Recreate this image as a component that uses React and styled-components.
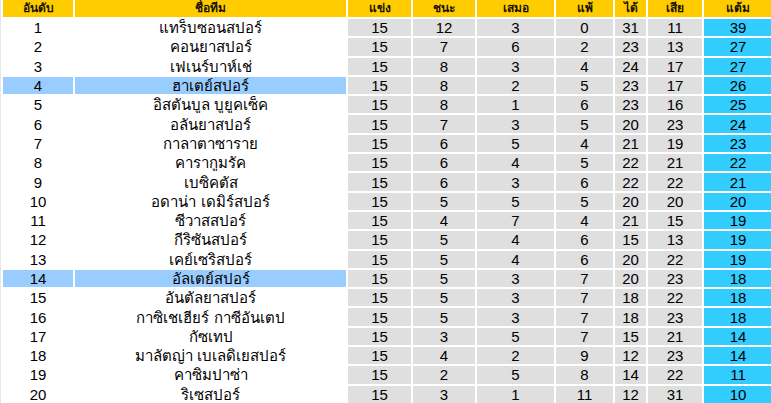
import React from "react";
import styled, { createGlobalStyle } from "styled-components";

const GlobalStyle = createGlobalStyle`
  html, body {
    margin: 0;
    padding: 0;
    background: #e6e6e6;
    overflow: hidden;
  }
`;

const Wrap = styled.div`
  width: 790px;
  padding-left: 1px;
  margin-top: -2px;
`;

const Table = styled.table`
  table-layout: fixed;
  border-collapse: separate;
  border-spacing: 2px;
  background: #ffffff;
  font-family: Tahoma, "Liberation Sans", "Noto Sans", sans-serif;
  font-size: 15px;
  color: #000;
`;

const Head = styled.th`
  background: #ffcc00;
  color: #1a1200;
  font-weight: bold;
  font-size: 12px;
  height: 17px;
  padding: 0;
  line-height: 17px;
  text-align: center;
  white-space: nowrap;
  overflow: hidden;
`;

const Cell = styled.td`
  height: 17.3px;
  padding: 0;
  line-height: 17px;
  text-align: center;
  white-space: nowrap;
  overflow: hidden;
  background: ${(p) =>
    p.$kind === "points"
      ? "#33ccff"
      : p.$kind === "stat"
      ? "#dfdfdf"
      : p.$hl
      ? "#99ccff"
      : "#ffffff"};
`;

const widths = [70, 271, 63, 62, 77, 57, 31, 54, 68];
const headers = ["อันดับ", "ชื่อทีม", "แข่ง", "ชนะ", "เสมอ", "แพ้", "ได้", "เสีย", "แต้ม"];

const rows = [
  ["แทร็บซอนสปอร์", 15, 12, 3, 0, 31, 11, 39],
  ["คอนยาสปอร์", 15, 7, 6, 2, 23, 13, 27],
  ["เฟเนร์บาห์เช่", 15, 8, 3, 4, 24, 17, 27],
  ["ฮาเตย์สปอร์", 15, 8, 2, 5, 23, 17, 26],
  ["อิสตันบูล บูยูคเซ็ค", 15, 8, 1, 6, 23, 16, 25],
  ["อลันยาสปอร์", 15, 7, 3, 5, 20, 23, 24],
  ["กาลาตาซาราย", 15, 6, 5, 4, 21, 19, 23],
  ["คารากูมรัค", 15, 6, 4, 5, 22, 21, 22],
  ["เบซิคตัส", 15, 6, 3, 6, 22, 22, 21],
  ["อดาน่า เดมิร์สปอร์", 15, 5, 5, 5, 20, 20, 20],
  ["ซีวาสสปอร์", 15, 4, 7, 4, 21, 15, 19],
  ["กีริซันสปอร์", 15, 5, 4, 6, 15, 13, 19],
  ["เคย์เซริสปอร์", 15, 5, 4, 6, 20, 22, 19],
  ["อัลเตย์สปอร์", 15, 5, 3, 7, 20, 23, 18],
  ["อันตัลยาสปอร์", 15, 5, 3, 7, 18, 22, 18],
  ["กาซิเชเฮียร์ กาซีอันเตป", 15, 5, 3, 7, 18, 23, 18],
  ["กัซเทป", 15, 3, 5, 7, 15, 21, 14],
  ["มาลัตญ่า เบเลดิเยสปอร์", 15, 4, 2, 9, 12, 23, 14],
  ["คาซิมปาซ่า", 15, 2, 5, 8, 14, 22, 11],
  ["ริเซสปอร์", 15, 3, 1, 11, 12, 31, 10],
];

const highlighted = [4, 14];

export default function App() {
  return (
    <>
      <GlobalStyle />
      <Wrap>
        <Table>
          <colgroup>
            {widths.map((w, i) => (
              <col key={i} style={{ width: w }} />
            ))}
          </colgroup>
          <thead>
            <tr>
              {headers.map((h) => (
                <Head key={h}>{h}</Head>
              ))}
            </tr>
          </thead>
          <tbody>
            {rows.map(([team, ...stats], i) => {
              const pos = i + 1;
              const hl = highlighted.includes(pos);
              return (
                <tr key={pos}>
                  <Cell $hl={hl}>{pos}</Cell>
                  <Cell $hl={hl}>{team}</Cell>
                  {stats.map((v, j) => (
                    <Cell key={j} $kind={j === stats.length - 1 ? "points" : "stat"}>
                      {v}
                    </Cell>
                  ))}
                </tr>
              );
            })}
          </tbody>
        </Table>
      </Wrap>
    </>
  );
}
